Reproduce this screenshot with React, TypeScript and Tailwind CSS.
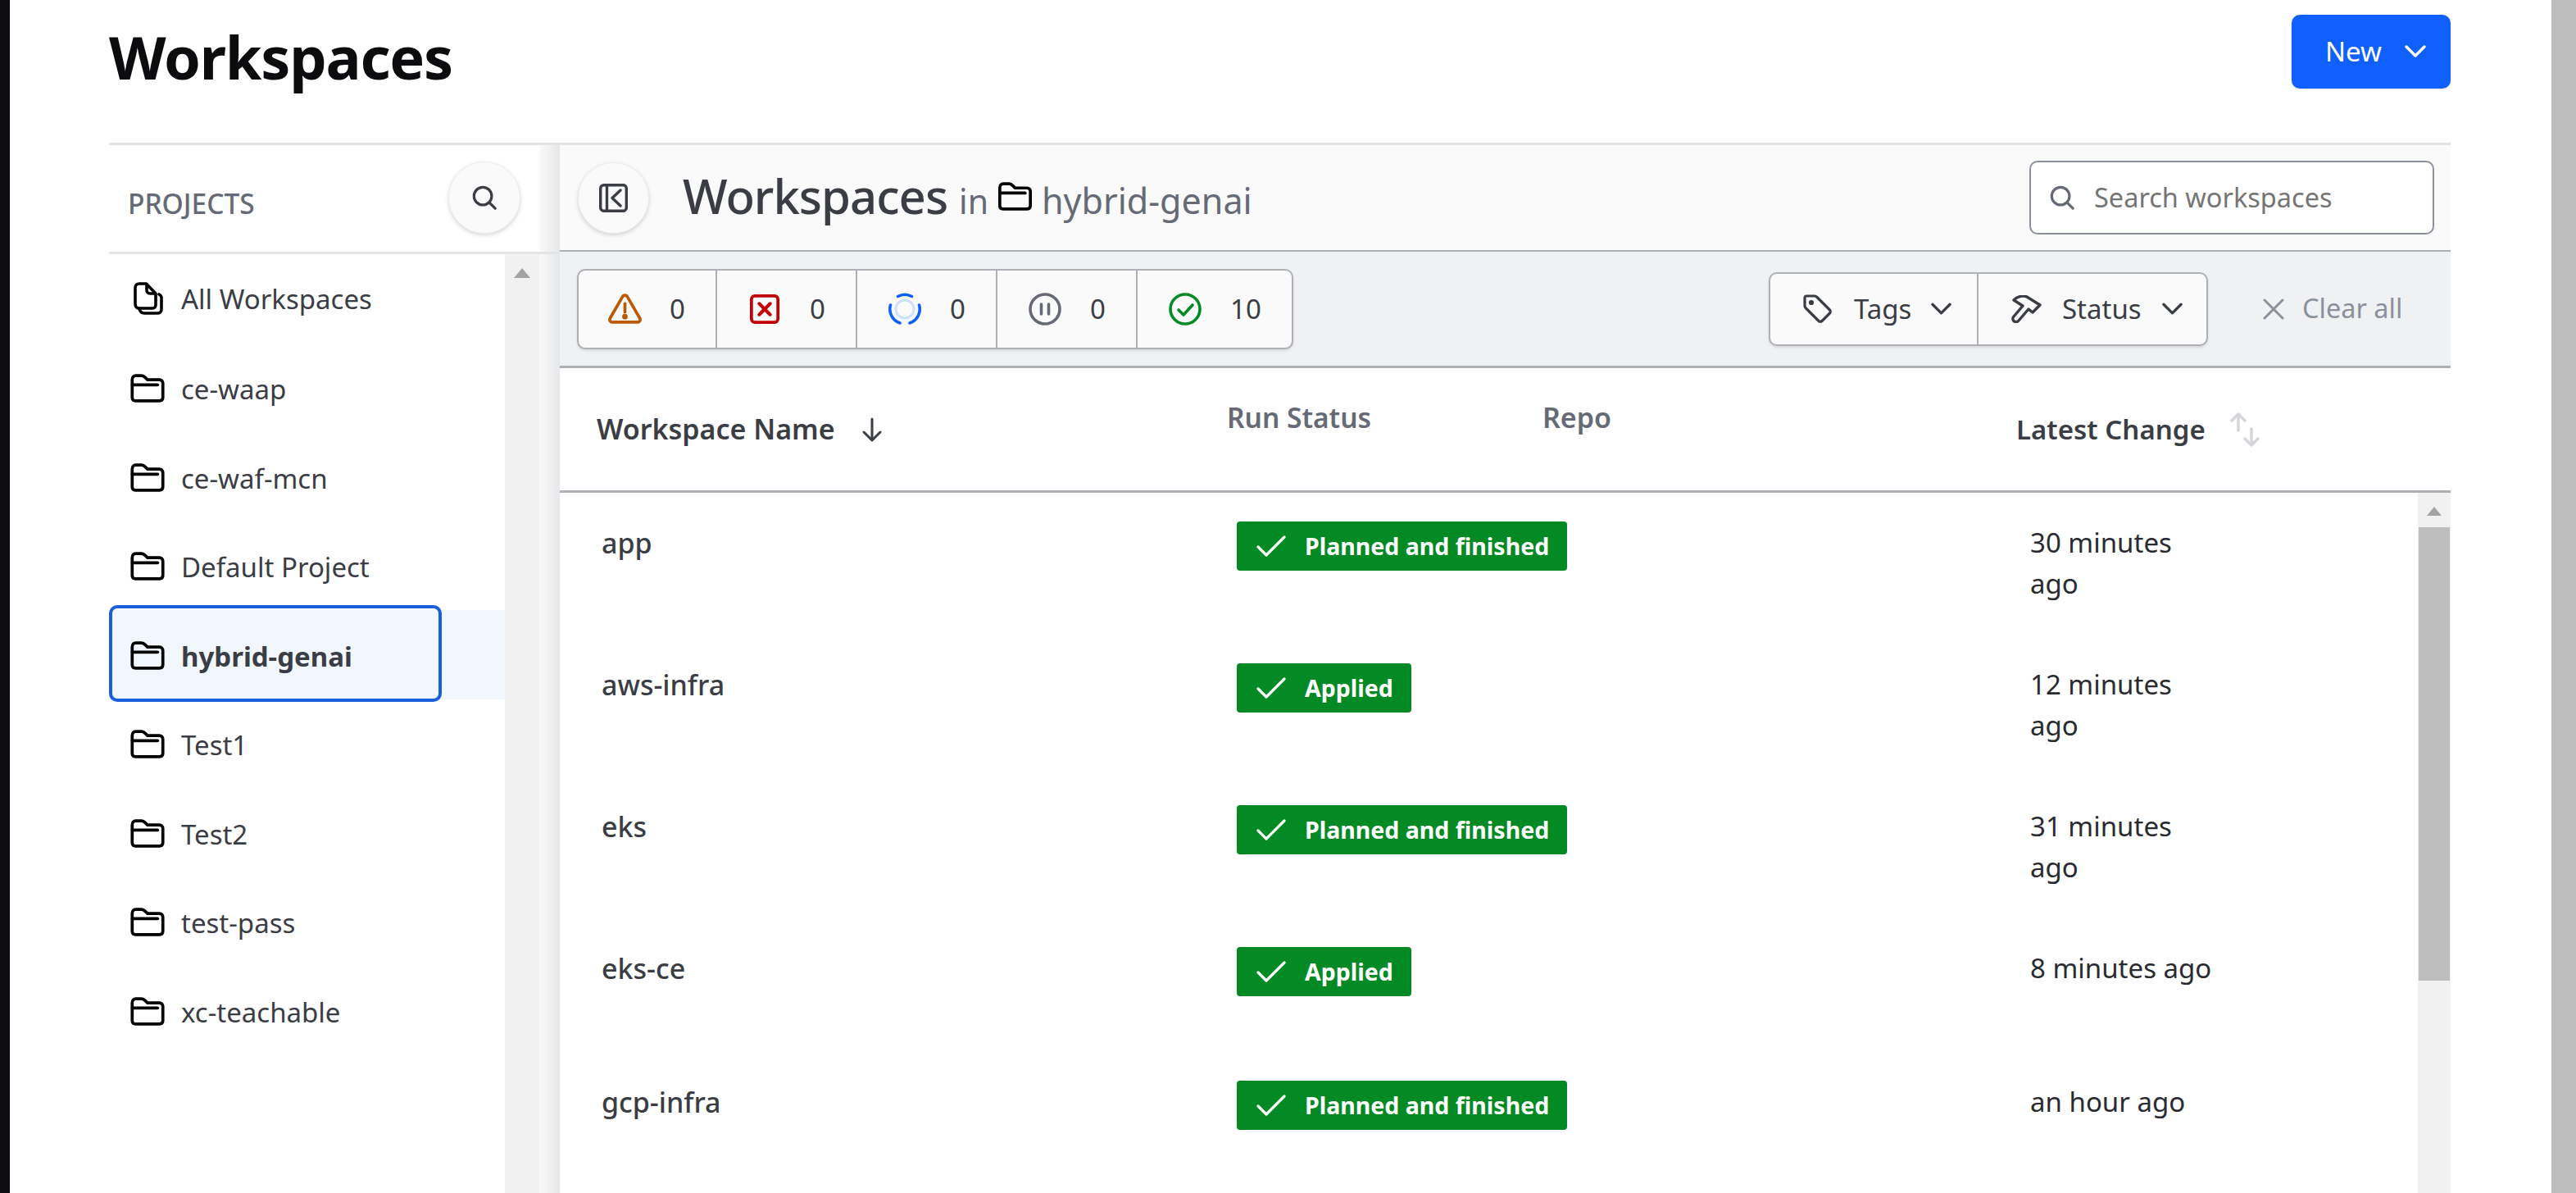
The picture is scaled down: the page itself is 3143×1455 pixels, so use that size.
import type { ReactNode } from "react";

const projects = ["ce-waap", "ce-waf-mcn", "Default Project", "hybrid-genai", "Test1", "Test2", "test-pass", "xc-teachable"];

const workspaces = [
  { name: "app", status: "Planned and finished", time: "30 minutes ago", tall: true },
  { name: "aws-infra", status: "Applied", time: "12 minutes ago", tall: true },
  { name: "eks", status: "Planned and finished", time: "31 minutes ago", tall: true },
  { name: "eks-ce", status: "Applied", time: "8 minutes ago", tall: false },
  { name: "gcp-infra", status: "Planned and finished", time: "an hour ago", tall: false },
];

function FolderIcon({ className = "w-[42px] h-[37px] -ml-[2px] text-black" }: { className?: string }) {
  return (
    <svg viewBox="0 0 40 36" fill="none" stroke="currentColor" strokeWidth="3.6" strokeLinejoin="round" strokeLinecap="round" className={className}>
      <path d="M1.8 7C1.8 4 3.5 2 6 2h7c2 0 3 1 4.500 2.500L20 7h14c2.500 0 4.200 1.700 4.200 4v17c0 2.500-1.700 4-4.200 4H6c-2.500 0-4.200-1.500-4.200-4z" />
      <path d="M2 13h30" />
    </svg>
  );
}

function DocsIcon() {
  return (
    <svg viewBox="0 0 36 40" fill="none" stroke="black" strokeWidth="3.6" strokeLinejoin="round" strokeLinecap="round" className="w-[36px] h-[40px]">
      <path d="M2 7c0-3 2-5 5-5h8.500L27 14v14c0 2-1.500 4-4 4H7c-3 0-5-2-5-5z" />
      <path d="M16 3v7c0 2 1.500 4 4 4h6" />
      <path d="M7 33c1 3 3 5 6 5h16c3 0 5-2 5-5V19c0-2-1-3-3-4" />
    </svg>
  );
}

function SearchIcon({ className }: { className: string }) {
  return (
    <svg viewBox="0 0 32 32" fill="none" stroke="currentColor" strokeWidth="3.4" strokeLinecap="round" className={className}>
      <circle cx="14" cy="14" r="11.500" />
      <path d="M22.500 22.500L30 30" />
    </svg>
  );
}

function Chevron({ className }: { className: string }) {
  return (
    <svg viewBox="0 0 26 16" fill="none" stroke="currentColor" strokeWidth="3.4" strokeLinecap="round" strokeLinejoin="round" className={className}>
      <path d="M2 2l11 11L24 2" />
    </svg>
  );
}

function ScrollArrow({ className }: { className: string }) {
  return (
    <svg viewBox="0 0 20 12" className={className}>
      <path d="M10 0l10 12H0z" fill="#a3a3a3" />
    </svg>
  );
}

function StatusCell({ icon, count, width }: { icon: ReactNode; count: number; width: string }) {
  return (
    <div className={`flex items-center h-full text-[33px] text-[#3b3d45] ${width}`}>
      <div className="w-[42px] flex justify-center">{icon}</div>
      <span className="ml-[34px]">{count}</span>
    </div>
  );
}

function StatusBadge({ label }: { label: string }) {
  return (
    <div className="inline-flex items-center h-[60px] pl-[24px] pr-[22px] rounded-[4px] bg-[#048a24] text-white text-[28.500px] font-bold">
      <svg viewBox="0 0 36 26" fill="none" stroke="white" strokeWidth="3.200" strokeLinecap="round" strokeLinejoin="round" className="w-[36px] h-[26px] mr-[23px]">
        <path d="M2 14l10 10L34 2" />
      </svg>
      {label}
    </div>
  );
}

export default function App() {
  return (
    <div className="flex w-[3143px] h-[1455px] overflow-hidden bg-white font-['Noto_Sans',sans-serif]">
      <div className="w-[12px] bg-[#0e0e10]" />

      <main className="flex-1 flex flex-col pl-[121px] pr-[123px]">
        {/* Page title */}
        <header className="h-[174px] flex items-start justify-between">
          <h1 className="mt-[22px] text-[72px] leading-[94px] font-bold text-[#0c0c0e] tracking-[-1.200px]">Workspaces</h1>
          <button className="mt-[18px] w-[194px] h-[90px] flex items-center pl-[41px] rounded-[10px] bg-[#1060ff] text-white text-[33px] shadow-sm">
            New
            <Chevron className="w-[26px] h-[16px] ml-[28px]" />
          </button>
        </header>

        <div className="flex-1 flex border-t-[3px] border-[#e3e4e6] min-h-0">
          {/* Projects sidebar */}
          <aside className="w-[550px] flex flex-col bg-[linear-gradient(to_right,#fff_525px,#f9f9f9_525px,#e6e7e9)]">
            <div className="h-[133px] flex items-center justify-between pl-[23px] pr-[48px] border-b-[3px] border-[#e3e4e6]">
              <span className="mt-[13px] text-[33.500px] font-medium text-[#656a76]">PROJECTS</span>
              <button className="w-[88px] h-[88px] mt-[-2px] rounded-full bg-[#fafafa] border border-[#eeeeee] shadow-[0_2px_5px_rgba(0,0,0,0.16)] flex items-center justify-center text-[#3b3d45]">
                <SearchIcon className="w-[30px] h-[30px]" />
              </button>
            </div>
            <div className="flex-1 flex mr-[25px] bg-white">
              <ul className="flex-1 text-[33px] text-[#3b3d45]">
                <li className="h-[108.500px] flex items-center pl-[28px]">
                  <div className="w-[40px] flex justify-center"><DocsIcon /></div>
                  <span className="ml-[20px]">All Workspaces</span>
                </li>
                {projects.map((project) => {
                  const selected = project === "hybrid-genai";
                  return (
                    <li key={project} className={`relative h-[108.500px] flex items-center pl-[28px] pt-[4px] ${selected ? "bg-[#f2f7fe] font-bold" : ""}`}>
                      {selected && <div className="absolute left-0 top-[-6px] w-[406px] h-[118px] rounded-[10px] border-4 border-[#1a5fdb]" />}
                      <FolderIcon />
                      <span className="ml-[20px]">{project}</span>
                    </li>
                  );
                })}
              </ul>
              <div className="w-[42px] bg-[#f1f1f1] flex justify-center pt-[17px]">
                <ScrollArrow className="w-[20px] h-[12px]" />
              </div>
            </div>
          </aside>

          {/* Workspaces panel */}
          <section className="flex-1 flex flex-col min-w-0">
            <div className="h-[130px] flex items-center pl-[22px] pr-[20px] bg-[#fafafa] border-b-2 border-[#aeb0b5]">
              <button className="w-[87px] h-[87px] rounded-full bg-[#fafafa] border border-[#eeeeee] shadow-[0_2px_5px_rgba(0,0,0,0.16)] flex items-center justify-center">
                <svg viewBox="0 0 35 35" fill="none" stroke="#3b3d45" strokeWidth="3.400" strokeLinecap="round" strokeLinejoin="round" className="w-[35px] h-[35px]">
                  <rect x="1.700" y="1.700" width="31.600" height="31.600" rx="4" />
                  <path d="M9.500 2v31M26 8l-10 9.500L26 27" />
                </svg>
              </button>
              <div className="flex items-baseline ml-[41px] pb-[5px] text-[#656a76]">
                <span className="text-[58px] font-medium text-[#3b3d45] tracking-[-1px]">Workspaces</span>
                <span className="ml-[14px] text-[41px]">in</span>
                <FolderIcon className="w-[41px] h-[37px] ml-[12px] text-black self-center mt-[4px]" />
                <span className="ml-[12px] text-[43px]">hybrid-genai</span>
              </div>
              <div className="ml-auto w-[494px] h-[90px] flex items-center pl-[23px] bg-white rounded-[10px] border-2 border-[#8c909c] text-[#656a76]">
                <SearchIcon className="w-[30px] h-[30px]" />
                <input readOnly placeholder="Search workspaces" className="ml-[24px] flex-1 min-w-0 bg-transparent outline-none text-[32.500px] placeholder:text-[#757575]" />
              </div>
            </div>

            <div className="h-[142px] flex items-center pl-[21px] bg-[#f0f1f3] border-b-[3px] border-[#aeb0b5]">
              <div className="w-[874px] h-[98px] flex items-center rounded-[10px] bg-[#fafafa] border-2 border-[#aeb0b5] shadow-[0_2px_3px_rgba(0,0,0,0.1)] divide-x-2 divide-[#aeb0b5]">
                <div className="w-[169px] h-full pl-[35px]">
                  <StatusCell
                    width="w-full"
                    count={0}
                    icon={
                      <svg viewBox="0 0 40 36" fill="none" stroke="#bb5a00" strokeWidth="3.600" strokeLinejoin="round" strokeLinecap="round" className="w-[41px] h-[37px]">
                        <path d="M20 2c-1.500 0-2.500 1-3 2L2.500 29c-1.500 2.500 0 5 2.500 5h30c2.500 0 4-2.500 2.500-5L23 4c-.5-1-1.500-2-3-2z" />
                        <path d="M20 12v10" />
                        <circle cx="20" cy="27.500" r="1.500" fill="#bb5a00" />
                      </svg>
                    }
                  />
                </div>
                <div className="w-[171px] h-full pl-[37px]">
                  <StatusCell
                    width="w-full"
                    count={0}
                    icon={
                      <svg viewBox="0 0 35 35" fill="none" stroke="#c00005" strokeWidth="3.600" strokeLinecap="round" className="w-[36px] h-[36px]">
                        <rect x="1.800" y="1.800" width="31.400" height="31.400" rx="4" />
                        <path strokeWidth="4" d="M11 11l13 13M24 11L11 24" />
                      </svg>
                    }
                  />
                </div>
                <div className="w-[171px] h-full pl-[37px]">
                  <StatusCell
                    width="w-full"
                    count={0}
                    icon={
                      <svg viewBox="0 0 40 40" fill="none" strokeLinecap="round" className="w-[40px] h-[40px]">
                        <circle cx="20" cy="20" r="11" stroke="#cce0ff" strokeWidth="3" />
                        <path stroke="#1060ff" strokeWidth="3.600" d="M11.500 4.500A18 18 0 0 1 28.500 4.500M37.500 15A18 18 0 0 1 26 37M14 37A18 18 0 0 1 2.500 15" />
                      </svg>
                    }
                  />
                </div>
                <div className="w-[171px] h-full pl-[37px]">
                  <StatusCell
                    width="w-full"
                    count={0}
                    icon={
                      <svg viewBox="0 0 40 40" fill="none" stroke="#656a76" strokeWidth="3.600" strokeLinecap="round" className="w-[40px] h-[40px]">
                        <circle cx="20" cy="20" r="18" />
                        <path d="M15.500 14v12M24.500 14v12" />
                      </svg>
                    }
                  />
                </div>
                <div className="flex-1 h-full pl-[37px]">
                  <StatusCell
                    width="w-full"
                    count={10}
                    icon={
                      <svg viewBox="0 0 40 40" fill="none" stroke="#048a24" strokeWidth="3.600" strokeLinecap="round" strokeLinejoin="round" className="w-[40px] h-[40px]">
                        <circle cx="20" cy="20" r="18" />
                        <path d="M12 21l6 6 11-12" />
                      </svg>
                    }
                  />
                </div>
              </div>

              <div className="ml-auto w-[536px] h-[90px] flex rounded-[10px] bg-[#fafafa] border-2 border-[#aeb0b5] shadow-[0_2px_3px_rgba(0,0,0,0.1)] text-[33px] text-[#3b3d45]">
                <div className="w-[254px] flex items-center pl-[40px] border-r-2 border-[#aeb0b5]">
                  <svg viewBox="0 0 35 35" fill="none" stroke="#3b3d45" strokeWidth="3.200" strokeLinejoin="round" strokeLinecap="round" className="w-[35px] h-[35px]">
                    <path d="M2 4c0-1 1-2 2-2h10c1 0 2 .5 3 1.500L32.500 19c1 1 1 3 0 4L23 32.500c-1 1-3 1-4 0L3.500 17C2.500 16 2 15 2 14z" />
                    <circle cx="10" cy="10" r="1.500" fill="#3b3d45" />
                  </svg>
                  <span className="ml-[27px]">Tags</span>
                  <Chevron className="w-[25px] h-[16px] ml-[24px]" />
                </div>
                <div className="flex-1 flex items-center pl-[40px]">
                  <svg viewBox="0 0 37 34" fill="none" stroke="#3b3d45" strokeWidth="3.400" strokeLinejoin="round" strokeLinecap="round" className="w-[37px] h-[34px]">
                    <path d="M3 6C8 1 15 0 19 2l16 10-9 9-5-4L9 31c-1.500 2-4.500 2-6 .5s-1.500-4 0-5.500L14 13z" />
                  </svg>
                  <span className="ml-[25px]">Status</span>
                  <Chevron className="w-[25px] h-[16px] ml-[25px]" />
                </div>
              </div>

              <div className="w-[296px] flex items-center pl-[67px] text-[32.500px] text-[#8c909c]">
                <svg viewBox="0 0 26 26" fill="none" stroke="#8c909c" strokeWidth="3" strokeLinecap="round" className="w-[26px] h-[26px]">
                  <path d="M2 2l22 22M24 2L2 24" />
                </svg>
                <span className="ml-[22px]">Clear all</span>
              </div>
            </div>

            {/* Table head */}
            <div className="h-[152px] flex items-center border-b-[3px] border-[#aeb0b5] font-semibold">
              <div className="w-[814px] pl-[45px] flex items-center text-[34px] text-[#3b3d45]">
                Workspace Name
                <svg viewBox="0 0 26 30" fill="none" stroke="#3b3d45" strokeWidth="3" strokeLinecap="round" strokeLinejoin="round" className="w-[26px] h-[32px] ml-[32px]">
                  <path d="M13 2v26M3 18l10 10 10-10" />
                </svg>
              </div>
              <div className="w-[385px] pb-[28px] text-[33.500px] text-[#656a76]">Run Status</div>
              <div className="w-[578px] pb-[28px] text-[34px] text-[#656a76]">Repo</div>
              <div className="flex items-center text-[33px] text-[#3b3d45]">
                Latest Change
                <svg viewBox="0 0 36 42" fill="none" stroke="#d5d6da" strokeWidth="3.400" strokeLinecap="round" strokeLinejoin="round" className="w-[36px] h-[42px] ml-[30px]">
                  <path d="M10 22V2M2 10l8-8 8 8M26 20v20M18 32l8 8 8-8" />
                </svg>
              </div>
            </div>

            {/* Table rows */}
            <div className="flex-1 flex min-h-0">
              <div className="flex-1 min-w-0">
                {workspaces.map((workspace) => (
                  <div key={workspace.name} className={`flex items-start pt-[35px] ${workspace.tall ? "h-[173px]" : "h-[163px]"}`}>
                    <div className="w-[826px] pl-[51px] mt-[1px] text-[34px] leading-[50px] font-medium text-[#3b3d45]">{workspace.name}</div>
                    <div className="w-[968px]">
                      <StatusBadge label={workspace.status} />
                    </div>
                    <div className="w-[228px] mt-[1px] text-[33px] leading-[50px] text-[#2a2b30]">{workspace.time}</div>
                  </div>
                ))}
              </div>
              <div className="w-[40px] flex flex-col items-center bg-[#f1f1f1]">
                <ScrollArrow className="w-[18px] h-[11px] mt-[17px]" />
                <div className="w-[38px] h-[553px] mt-[14px] bg-[#bdbdbd]" />
              </div>
            </div>
          </section>
        </div>
      </main>

      <div className="w-[30px] bg-[#bdbdbd]" />
    </div>
  );
}
